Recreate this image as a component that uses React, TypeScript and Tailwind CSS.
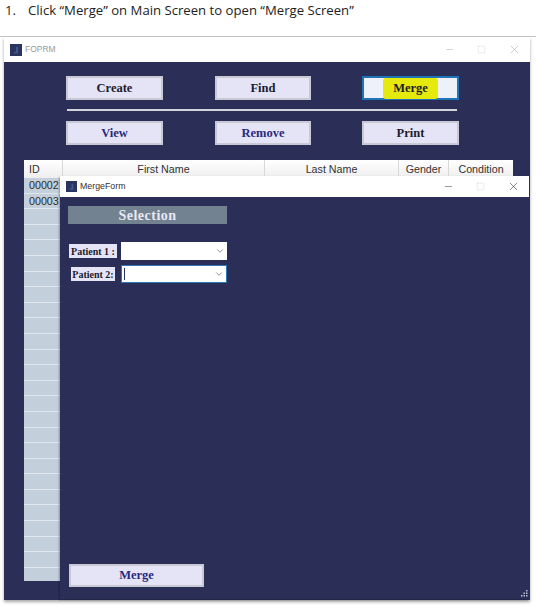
import React from 'react';
import { ChevronDown, Minus, Square, X } from 'lucide-react';

const serif = "font-['Liberation_Serif',serif] font-bold";

const AppIcon = ({ size }: { size: number }) => (
  <svg width={size} height={size} viewBox="0 0 12 12" className="shrink-0">
    <rect width="12" height="12" fill="#2a3560" />
    <rect x="6" y="3" width="2" height="6" fill="#46578c" />
    <rect x="4" y="8" width="4" height="1.5" fill="#46578c" />
  </svg>
);

const MainButton = ({
  label,
  color = 'text-[#1c1c2c]',
  active = false,
  className = 'w-[97px]',
}: {
  label: string;
  color?: string;
  active?: boolean;
  className?: string;
}) => (
  <button
    className={`h-[24px] ${className} ${serif} text-[12.5px] ${color} ${
      active ? 'border-2 border-[#1f74b8] bg-[#eef0fa]' : 'border-2 border-[#c9c9d6] bg-[#e4e4f6]'
    }`}
  >
    {active ? <span className="inline-block rounded-[3px] bg-[#e6ea0c] px-[10px] py-[1px]">{label}</span> : label}
  </button>
);

const PatientRow = ({
  label,
  labelClass,
  focused = false,
}: {
  label: string;
  labelClass: string;
  focused?: boolean;
}) => (
  <div className="flex items-center">
    <div className="w-[53px] shrink-0">
      <div className={`flex h-[14px] items-center justify-center bg-[#e4e4f6] ${labelClass} ${serif} text-[10px] text-[#1c1c2c]`}>
        {label}
      </div>
    </div>
    <div
      className={`flex h-[18px] w-[106px] items-center justify-between bg-white pr-[2px] ${
        focused ? 'border border-[#2a78b8]' : ''
      }`}
    >
      {focused ? <span className="ml-[2px] h-[12px] w-px bg-[#2a3560]" /> : <span />}
      <ChevronDown size={10} strokeWidth={1.5} className="text-[#555]" />
    </div>
  </div>
);

const WindowControls = ({ faded = false }: { faded?: boolean }) => (
  <div className={`flex items-center ${faded ? 'text-[#a8a8a8]' : 'text-[#222]'}`}>
    <Minus size={11} strokeWidth={1} />
    <Square size={9} strokeWidth={1} className="ml-[22px] text-[#c8c8c8]" />
    <X size={13} strokeWidth={1} className="ml-[22px]" />
  </div>
);

const App: React.FC = () => {
  const rows = Array.from({ length: 26 }, (_, i) => (i === 0 ? '00002' : i === 1 ? '00003' : ''));

  return (
    <div className="relative h-[607px] w-[536px] overflow-hidden bg-white font-['Liberation_Sans',sans-serif]">
      {/* Doc heading */}
      <div className="h-[36px] pt-[1px] font-['Open_Sans',sans-serif] text-[13.15px] leading-[18px] text-[#222]">
        <span className="ml-[5px] inline-block w-[23px]">1.</span>
        Click “Merge” on Main Screen to open “Merge Screen”
      </div>
      <div className="h-px bg-[#c4c4c4]" />

      {/* Main window */}
      <div className="ml-[4px] h-[563px] w-[526px] shadow-[0_2px_3px_rgba(0,0,0,0.35)]">
        <div className="flex h-[25px] items-center justify-between bg-white pl-[6px] pr-[9px]">
          <div className="flex items-center gap-[3px]">
            <AppIcon size={12} />
            <span className="text-[8.5px] text-[#9a9a9a]">FOPRM</span>
          </div>
          <WindowControls faded />
        </div>

        <div className="h-[538px] overflow-hidden bg-[#2b2f58] pt-[14px]">
          <div className="ml-[62px] flex">
            <MainButton label="Create" />
            <MainButton label="Find" className="ml-[52px] w-[96px]" />
            <MainButton label="Merge" active className="ml-[51px] w-[97px]" />
          </div>
          <div className="ml-[63px] mt-[9px] h-[2px] w-[390px] bg-[#d5d5de]" />
          <div className="ml-[62px] mt-[10px] flex">
            <MainButton label="View" color="text-[#2b2a80]" />
            <MainButton label="Remove" color="text-[#2b2a80]" className="ml-[52px] w-[96px]" />
            <MainButton label="Print" className="ml-[51px] w-[97px]" />
          </div>

          {/* Patient table */}
          <div className="ml-[20px] mt-[15px] h-[421px] w-[489px] overflow-hidden bg-[#c3d0dc]">
            <div className="flex h-[18px] bg-gradient-to-b from-white to-[#eeeeee] text-[10.7px] leading-[18px] text-[#333]">
              <div className="w-[39px] border-r border-[#d8d8d8] pl-[5px]">ID</div>
              <div className="w-[202px] border-r border-[#d8d8d8] text-center">First Name</div>
              <div className="w-[134px] border-r border-[#d8d8d8] text-center">Last Name</div>
              <div className="w-[50px] border-r border-[#d8d8d8] text-center">Gender</div>
              <div className="flex-1 text-center">Condition</div>
            </div>
            {rows.map((id, i) => (
              <div key={i} className="h-[15.6px] border-b border-[#dfe6ed] pl-[5px] text-[10.7px] leading-[15px] text-[#2a2a2a]">
                {id}
              </div>
            ))}
          </div>
        </div>
      </div>

      {/* Merge form, floats over the main window */}
      <div className="absolute left-[60px] top-[176px] flex h-[423px] w-[469px] flex-col bg-[#2b2f58] shadow-[-1px_1px_2px_rgba(0,0,0,0.3)]">
        <div className="flex h-[21px] items-center justify-between bg-white pl-[6px] pr-[9px]">
          <div className="flex items-center gap-[3px]">
            <AppIcon size={11} />
            <span className="text-[8.8px] text-[#333]">MergeForm</span>
          </div>
          <WindowControls />
        </div>
        <div className="flex flex-1 flex-col pl-[8px]">
          <div className={`mt-[9px] flex h-[18px] w-[159px] items-center justify-center bg-[#728291] ${serif} text-[14px] tracking-[0.5px] text-[#e8e8f0]`}>
            Selection
          </div>
          <div className="mt-[18px]">
            <PatientRow label="Patient 1 :" labelClass="ml-[1px] w-[48px]" />
          </div>
          <div className="mt-[5px]">
            <PatientRow label="Patient 2:" labelClass="ml-[3px] w-[44px]" focused />
          </div>
          <button className={`mb-[12px] ml-[1px] mt-auto h-[23px] w-[135px] border-2 border-[#c9c9d6] bg-[#e4e4f6] ${serif} text-[12.5px] text-[#2b2a80]`}>
            Merge
          </button>
        </div>
        <svg width="7" height="7" viewBox="0 0 7 7" className="absolute bottom-[2px] right-[1px]" fill="#b9bdd6">
          <rect x="5" y="0" width="1.5" height="1.5" />
          <rect x="2.5" y="2.5" width="1.5" height="1.5" />
          <rect x="5" y="2.5" width="1.5" height="1.5" />
          <rect x="0" y="5" width="1.5" height="1.5" />
          <rect x="2.5" y="5" width="1.5" height="1.5" />
          <rect x="5" y="5" width="1.5" height="1.5" />
        </svg>
      </div>
    </div>
  );
};

export default App;
